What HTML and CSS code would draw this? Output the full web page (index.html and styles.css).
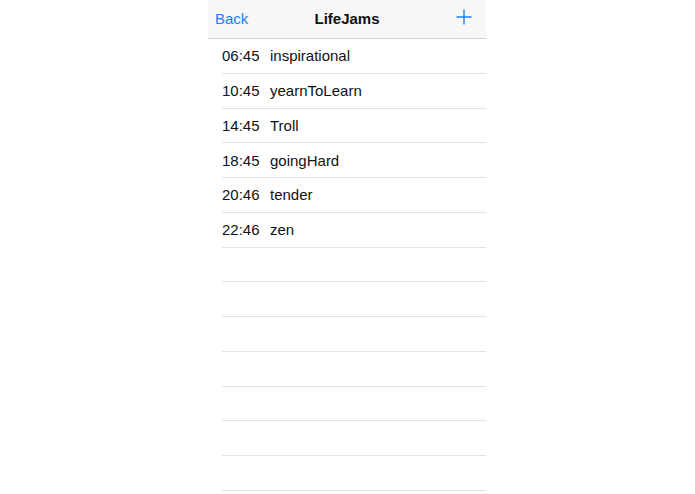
FILE: index.html
```html
<!DOCTYPE html>
<html lang="en">
<head>
    <meta charset="UTF-8">
    <meta name="viewport" content="width=device-width, initial-scale=1.0">
    <title>LifeJams</title>
    <link rel="stylesheet" href="styles.css">
</head>
<body>
    <div class="phone">
        <!-- Navigation bar -->
        <header class="navbar">
            <a class="nav-back" href="#">Back</a>
            <div class="nav-title">LifeJams</div>
            <a class="nav-add" href="#">
                <svg width="16" height="16" viewBox="0 0 16 16">
                    <path d="M8 0.5V15.5M0.5 8H15.5" stroke="#1a7efb" stroke-width="1.4" fill="none"/>
                </svg>
            </a>
        </header>

        <ul class="list">
            <li class="row"><span class="time">06:45</span><span class="name">inspirational</span></li>
            <li class="row"><span class="time">10:45</span><span class="name">yearnToLearn</span></li>
            <li class="row"><span class="time">14:45</span><span class="name">Troll</span></li>
            <li class="row"><span class="time">18:45</span><span class="name">goingHard</span></li>
            <li class="row"><span class="time">20:46</span><span class="name">tender</span></li>
            <li class="row"><span class="time">22:46</span><span class="name">zen</span></li>
            <li class="row"></li>
            <li class="row"></li>
            <li class="row"></li>
            <li class="row"></li>
            <li class="row"></li>
            <li class="row"></li>
            <li class="row"></li>
        </ul>
    </div>
</body>
</html>
```

FILE: styles.css
```css
body {
    margin: 0;
    background: #fff;
    font-family: "Liberation Sans", Arial, sans-serif;
    color: #111;
    overflow: hidden;
}

.phone {
    width: 278px;
    margin-left: 208px;
}

.navbar {
    height: 39px;
    background: #f7f7f8;
    border-bottom: 1px solid #d4d4d6;
    box-sizing: border-box;
    display: flex;
    align-items: center;
    justify-content: space-between;
    padding: 0 14px 2px 7px;
    position: relative;
}

.nav-back {
    color: #1a7efb;
    font-size: 15px;
    text-decoration: none;
}

.nav-title {
    position: absolute;
    left: 0;
    right: 0;
    text-align: center;
    font-size: 15px;
    font-weight: bold;
    pointer-events: none;
}

.nav-add {
    display: flex;
    margin-top: -2px;
}

.list {
    list-style: none;
    margin: 0;
    padding: 0 0 0 14px;
}

.row {
    height: 34.75px;
    box-sizing: border-box;
    border-bottom: 1px solid #e2e2e4;
    display: flex;
    align-items: center;
    font-size: 15px;
}

.time {
    width: 48px;
}
```
